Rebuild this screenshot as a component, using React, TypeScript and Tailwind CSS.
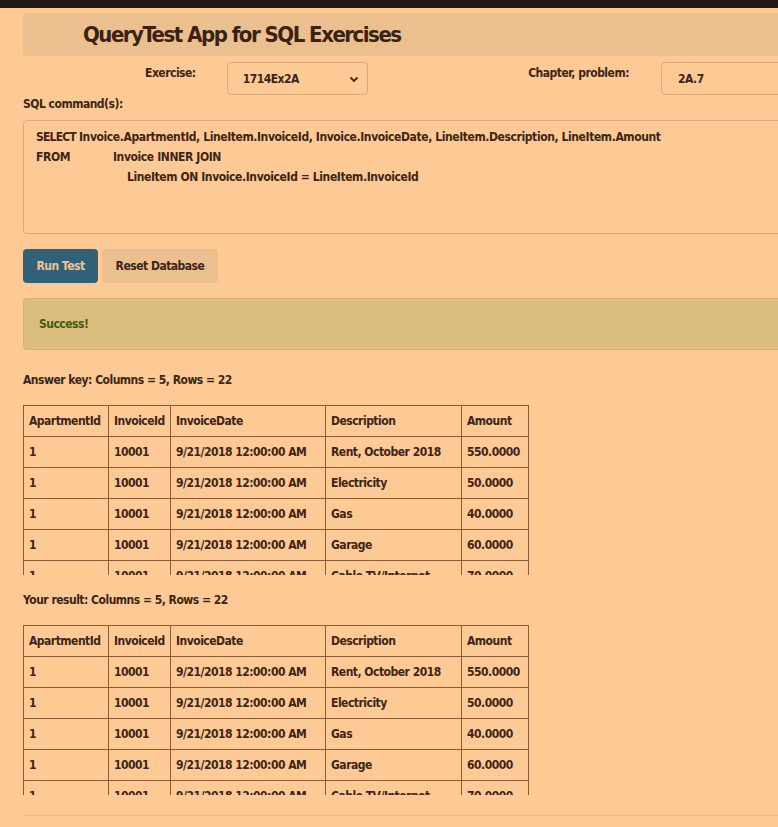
import React from "react";

type Row = {
  apartmentId: string;
  invoiceId: string;
  invoiceDate: string;
  description: string;
  amount: string;
};

const rows: Row[] = [
  { apartmentId: "1", invoiceId: "10001", invoiceDate: "9/21/2018 12:00:00 AM", description: "Rent, October 2018", amount: "550.0000" },
  { apartmentId: "1", invoiceId: "10001", invoiceDate: "9/21/2018 12:00:00 AM", description: "Electricity", amount: "50.0000" },
  { apartmentId: "1", invoiceId: "10001", invoiceDate: "9/21/2018 12:00:00 AM", description: "Gas", amount: "40.0000" },
  { apartmentId: "1", invoiceId: "10001", invoiceDate: "9/21/2018 12:00:00 AM", description: "Garage", amount: "60.0000" },
  { apartmentId: "1", invoiceId: "10001", invoiceDate: "9/21/2018 12:00:00 AM", description: "Cable TV/Internet", amount: "70.0000" },
  { apartmentId: "1", invoiceId: "10001", invoiceDate: "9/21/2018 12:00:00 AM", description: "Water", amount: "20.0000" },
];

const headers = ["ApartmentId", "InvoiceId", "InvoiceDate", "Description", "Amount"];
const colWidths = ["w-[85px]", "w-[62px]", "w-[155px]", "w-[136px]", "w-[67px]"];

function ResultTable({ title, className }: { title: string; className: string }) {
  return (
    <div className={className}>
      <p className="text-[12px] leading-[20px] tracking-[-0.5px]">{title}</p>
      <div className="mt-[15px] h-[170px] w-[508px] overflow-hidden">
        <table className="w-[505px] table-fixed border-collapse border border-[#8c5a33] text-[12px] tracking-[-0.5px]">
          <thead>
            <tr className="h-[31px]">
              {headers.map((h, i) => (
                <th
                  key={h}
                  className={`${colWidths[i]} whitespace-nowrap border border-[#8c5a33] px-[5px] text-left font-bold`}
                >
                  {h}
                </th>
              ))}
            </tr>
          </thead>
          <tbody>
            {rows.map((r, i) => (
              <tr key={i} className="h-[31px] whitespace-nowrap">
                <td className="border border-[#8c5a33] px-[5px]">{r.apartmentId}</td>
                <td className="border border-[#8c5a33] px-[5px]">{r.invoiceId}</td>
                <td className="border border-[#8c5a33] px-[5px]">{r.invoiceDate}</td>
                <td className="border border-[#8c5a33] px-[5px]">{r.description}</td>
                <td className="border border-[#8c5a33] px-[5px]">{r.amount}</td>
              </tr>
            ))}
          </tbody>
        </table>
      </div>
    </div>
  );
}

export default function App() {
  return (
    <div
      className="min-h-screen w-full overflow-hidden bg-[#fdc995] font-bold text-[#3d2515]"
      style={{ fontFamily: '"Liberation Sans Narrow", "DejaVu Sans Condensed", "Liberation Sans", sans-serif' }}
    >
      <div className="h-[8px] bg-[#1f1a15]" />
      <div className="w-[900px] pl-[23px] pb-[12px]">
        <header className="mt-[5px] flex h-[43px] items-center rounded-[4px] bg-[#ecbf8e] pl-[60px]">
          <h1 className="text-[22px] leading-none tracking-[-1.5px] text-[#3a2213]">QueryTest App for SQL Exercises</h1>
        </header>

        <div className="mt-[6px] flex items-start whitespace-nowrap text-[12px] tracking-[-0.5px]">
          <label className="ml-[122px] mt-[3px] leading-[16px]">Exercise:</label>
          <div className="ml-[31px] flex h-[33px] w-[142px] items-center justify-between rounded-[4px] border border-[#dcaa7a] pl-[15px] pr-[8px]">
            <span>1714Ex2A</span>
            <svg width="10" height="10" viewBox="0 0 10 10" fill="none">
              <path d="M1.5 3.5 L5 7 L8.5 3.5" stroke="#3d2515" strokeWidth="1.8" />
            </svg>
          </div>
          <label className="ml-[160px] mt-[3px] leading-[16px]">Chapter, problem:</label>
          <div className="ml-[32px] flex h-[33px] w-[240px] items-center rounded-[4px] border border-[#dcaa7a] pl-[16px]">
            2A.7
          </div>
        </div>

        <p className="mt-[1px] text-[12px] leading-[16px] tracking-[-0.5px]">SQL command(s):</p>
        <div className="mt-[8px] h-[114px] whitespace-nowrap rounded-[4px] border border-[#dcaa7a] pl-[12px] pt-[6px] text-[12px] leading-[20px] tracking-[-0.4px]">
          <div>
            <span className="inline-block w-[43px] tracking-[-0.8px]">SELECT</span>
            Invoice.ApartmentId, LineItem.InvoiceId, Invoice.InvoiceDate, LineItem.Description, LineItem.Amount
          </div>
          <div>
            <span className="inline-block w-[77px]">FROM</span>
            Invoice INNER JOIN
          </div>
          <div className="pl-[91px]">LineItem ON Invoice.InvoiceId = LineItem.InvoiceId</div>
        </div>

        <div className="mt-[15px] flex gap-[4px] text-[12px] tracking-[-0.5px]">
          <button className="h-[34px] w-[75px] rounded-[4px] bg-[#2f6178] text-[#f5c291]">Run Test</button>
          <button className="h-[34px] w-[116px] rounded-[4px] bg-[#ecbf8e]">Reset Database</button>
        </div>

        <div className="mt-[15px] flex h-[52px] items-center rounded-[4px] border border-[#d4b474] bg-[#dbbd80] pl-[15px] text-[12px] tracking-[-0.5px] text-[#3f5a16]">
          Success!
        </div>

        <ResultTable className="mt-[20px]" title="Answer key: Columns = 5, Rows = 22" />
        <ResultTable className="mt-[15px]" title="Your result: Columns = 5, Rows = 22" />

        <hr className="mt-[20px] border-t border-[#f1bb87]" />
      </div>
    </div>
  );
}
